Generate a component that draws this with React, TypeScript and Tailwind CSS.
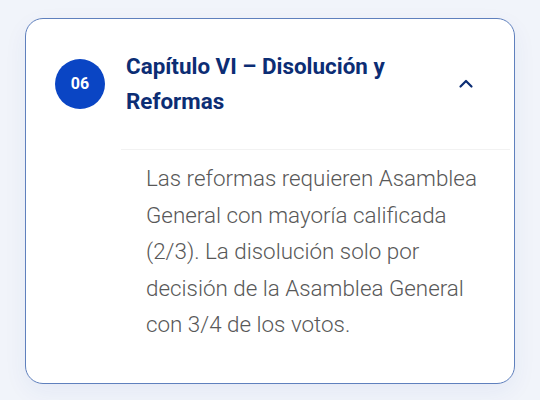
import React from "react";

export default function App() {
  return (
    <div className="w-[540px] h-[400px] bg-[#f1f4fa] pt-[18px] px-[25px]" style={{ fontFamily: "Roboto, 'Noto Sans', sans-serif" }}>
      <div className="w-[490px] h-[366px] rounded-[18px] border border-[#5f80bd] bg-white shadow-[0_8px_24px_rgba(30,64,175,0.06)]">
        <div className="flex items-center pl-[29px] pr-[30px] pt-[30px] pb-[30px]">
          <div className="w-[50px] h-[50px] rounded-full bg-[#0a45c4] flex items-center justify-center text-white text-[16px] font-bold shrink-0">
            06
          </div>
          <div className="flex-1 ml-[21px] text-[22.4px] leading-[35px] font-bold text-[#0c2d74]">
            Capítulo VI – Disolución y Reformas
          </div>
          <div className="w-[24px] h-[24px] ml-[16px] mr-[6px] flex items-center justify-center shrink-0">
            <svg width="16" height="16" viewBox="0 0 16 16" fill="none">
              <path d="M2.5 10.5 L8 5 L13.5 10.5" stroke="#0c2d74" strokeWidth="2.2" strokeLinecap="round" strokeLinejoin="round" />
            </svg>
          </div>
        </div>
        <div className="ml-[95px] mr-[4px] border-t border-[#f2f2f2]" />
        <div className="pl-[120px] pr-[26px] pt-[10px] text-[22.4px] leading-[36.5px] font-light text-[#585858]">
          Las reformas requieren Asamblea General con mayoría calificada (2/3). La disolución solo por decisión de la Asamblea General con 3/4 de los votos.
        </div>
      </div>
    </div>
  );
}
